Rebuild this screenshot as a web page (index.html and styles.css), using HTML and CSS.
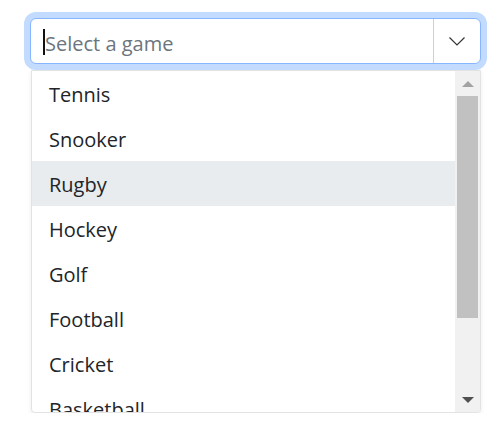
FILE: index.html
```html
<!DOCTYPE html>
<html>
<head>
<meta charset="utf-8">
<link rel="stylesheet" href="styles.css">
</head>
<body>
<div class="wrap">
  <div class="combo">
    <div class="field"><span class="caret"></span><span class="placeholder">Select a game</span></div>
    <div class="toggle">
      <svg width="16" height="9" viewBox="0 0 16 9"><polyline points="0.5,0.5 8,8 15.5,0.5" fill="none" stroke="#333" stroke-width="1.2"/></svg>
    </div>
  </div>
  <div class="popup">
    <ul class="items">
      <li>Tennis</li>
      <li>Snooker</li>
      <li class="active">Rugby</li>
      <li>Hockey</li>
      <li>Golf</li>
      <li>Football</li>
      <li>Cricket</li>
      <li>Basketball</li>
    </ul>
    <div class="scrollbar">
      <div class="btn up"><span class="tri-up"></span></div>
      <div class="track"><div class="thumb"></div></div>
      <div class="btn down"><span class="tri-down"></span></div>
    </div>
  </div>
</div>
</body>
</html>
```

FILE: styles.css
```css
html, body {
  margin: 0;
  padding: 0;
  background: #fff;
}
body {
  font-family: "Open Sans", "Noto Sans", sans-serif;
  color: #212529;
}
.wrap {
  padding: 18px 0 0 30px;
  width: 451px;
}
.combo {
  position: relative;
  z-index: 2;
  display: flex;
  height: 46px;
  box-sizing: border-box;
  border: 1px solid #86b7fe;
  border-radius: 6px;
  box-shadow: 0 0 0 6px #c2dbfe;
  background: #fff;
}
.field {
  flex: 1;
  display: flex;
  align-items: center;
  padding-left: 12px;
  font-size: 20px;
}
.caret {
  display: inline-block;
  width: 2px;
  height: 26px;
  background: #111;
  margin-top: 2px;
}
.placeholder {
  color: #6c757d;
  line-height: 1;
  margin-top: 5px;
}
.toggle {
  width: 46px;
  border-left: 1px solid #cfcfcf;
  display: flex;
  align-items: center;
  justify-content: center;
}
.toggle svg {
  display: block;
}
.popup {
  position: relative;
  z-index: 1;
  display: flex;
  margin-top: 6px;
  margin-left: 1px;
  width: 450px;
  height: 343px;
  box-sizing: border-box;
  border: 1px solid #e3e3e3;
  border-radius: 0 0 4px 4px;
  box-shadow: 0 2px 4px rgba(0,0,0,0.08);
  background: #fff;
  overflow: hidden;
}
.items {
  flex: 1;
  list-style: none;
  margin: 0;
  padding: 0;
  overflow: hidden;
  font-size: 20px;
}
.items li {
  box-sizing: border-box;
  height: 45px;
  padding-top: 2px;
  line-height: 43px;
  padding-left: 17px;
}
.items li.active {
  background: #e9ecef;
}
.scrollbar {
  width: 25px;
  background: #f1f1f1;
  display: flex;
  flex-direction: column;
}
.btn {
  height: 25px;
  display: flex;
  align-items: center;
  justify-content: center;
}
.tri-up {
  width: 0;
  height: 0;
  border-left: 6px solid transparent;
  border-right: 6px solid transparent;
  border-bottom: 6px solid #a3a3a3;
}
.tri-down {
  width: 0;
  height: 0;
  border-left: 6px solid transparent;
  border-right: 6px solid transparent;
  border-top: 6px solid #505050;
}
.track {
  flex: 1;
  padding: 0 2px;
}
.thumb {
  height: 222px;
  background: #c1c1c1;
}
```
